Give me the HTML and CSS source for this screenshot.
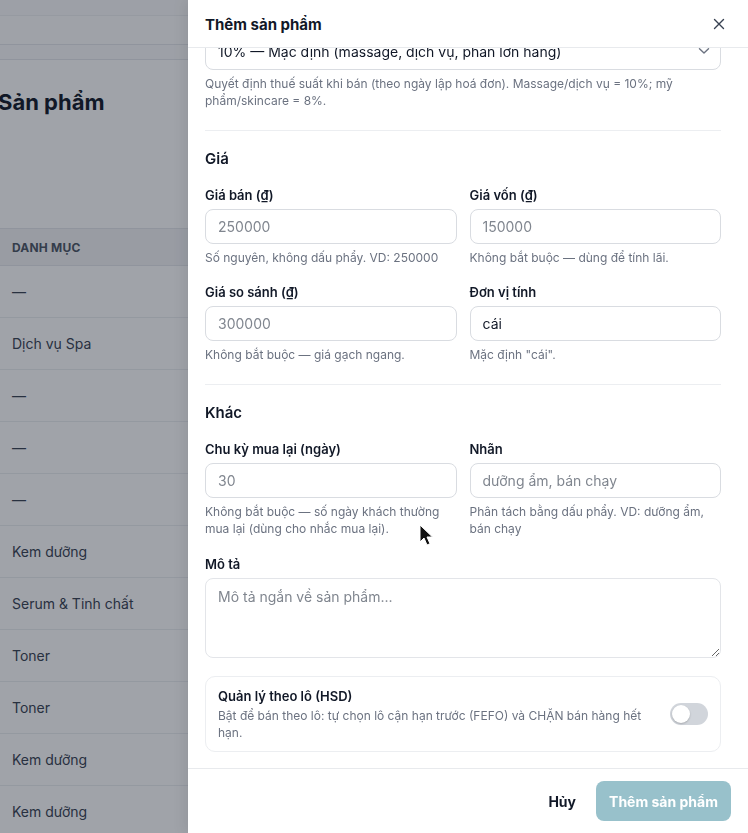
FILE: index.html
```html
<!DOCTYPE html>
<html lang="vi">
<head>
<meta charset="utf-8">
<link rel="stylesheet" href="styles.css">
</head>
<body>
<div class="page">
  <div class="topband"></div>
  <div class="band1"></div>
  <div class="band2"></div>
  <h1 class="page-title">Sản phẩm</h1>
  <div class="table">
    <div class="th">DANH MỤC</div>
    <div class="td">—</div>
    <div class="td">Dịch vụ Spa</div>
    <div class="td">—</div>
    <div class="td">—</div>
    <div class="td">—</div>
    <div class="td">Kem dưỡng</div>
    <div class="td">Serum &amp; Tinh chất</div>
    <div class="td">Toner</div>
    <div class="td">Toner</div>
    <div class="td">Kem dưỡng</div>
    <div class="td">Kem dưỡng</div>
  </div>
</div>
<div class="overlay"></div>
<aside class="drawer">
  <header class="dh">
    <h2 class="dh-title">Thêm sản phẩm</h2>
    <svg class="close" width="12" height="12" viewBox="0 0 12 12"><path d="M1.5 1.5l9 9M10.5 1.5l-9 9" stroke="#374151" stroke-width="1.4" stroke-linecap="round"/></svg>
  </header>
  <div class="db">
    <div class="scroll">
      <div class="select">
        <span>10% — Mặc định (massage, dịch vụ, phần lớn hàng)</span>
        <svg width="12" height="8" viewBox="0 0 12 8"><path d="M1.5 1.8l4.5 4.2 4.5-4.2" fill="none" stroke="#6b7280" stroke-width="1.4" stroke-linecap="round" stroke-linejoin="round"/></svg>
      </div>
      <p class="hint">Quyết định thuế suất khi bán (theo ngày lập hoá đơn). Massage/dịch vụ = 10%; mỹ phẩm/skincare = 8%.</p>
      <hr class="sep">
      <h3 class="sec">Giá</h3>
      <div class="grid">
        <div class="field">
          <label class="lbl">Giá bán (₫)</label>
          <div class="input ph">250000</div>
          <p class="hint">Số nguyên, không dấu phẩy. VD: 250000</p>
        </div>
        <div class="field">
          <label class="lbl">Giá vốn (₫)</label>
          <div class="input ph">150000</div>
          <p class="hint">Không bắt buộc — dùng để tính lãi.</p>
        </div>
        <div class="field">
          <label class="lbl">Giá so sánh (₫)</label>
          <div class="input ph">300000</div>
          <p class="hint">Không bắt buộc — giá gạch ngang.</p>
        </div>
        <div class="field">
          <label class="lbl">Đơn vị tính</label>
          <div class="input">cái</div>
          <p class="hint">Mặc định "cái".</p>
        </div>
      </div>
      <hr class="sep">
      <h3 class="sec">Khác</h3>
      <div class="grid">
        <div class="field">
          <label class="lbl">Chu kỳ mua lại (ngày)</label>
          <div class="input ph">30</div>
          <p class="hint">Không bắt buộc — số ngày khách thường mua lại (dùng cho nhắc mua lại).</p>
        </div>
        <div class="field">
          <label class="lbl">Nhãn</label>
          <div class="input ph">dưỡng ẩm, bán chạy</div>
          <p class="hint">Phân tách bằng dấu phẩy. VD: dưỡng ẩm, bán chạy</p>
        </div>
      </div>
      <div class="field desc">
        <label class="lbl">Mô tả</label>
        <textarea class="ta" placeholder="Mô tả ngắn về sản phẩm..."></textarea>
      </div>
      <div class="toggle-box">
        <div class="tb-text">
          <div class="tb-title">Quản lý theo lô (HSD)</div>
          <div class="tb-desc">Bật để bán theo lô: tự chọn lô cận hạn trước (FEFO) và CHẶN bán hàng hết hạn.</div>
        </div>
        <div class="switch"><span class="knob"></span></div>
      </div>
    </div>
  </div>
  <footer class="df">
    <button class="btn-cancel">Hủy</button>
    <button class="btn-primary">Thêm sản phẩm</button>
  </footer>
</aside>
<svg class="cursor" width="14" height="22" viewBox="0 0 14 22"><path d="M1 1v17l4-4 3 7 3-1.3-3-6.7h5.5z" fill="#111" stroke="#fff" stroke-width="1"/></svg>
</body>
</html>
```
FILE: styles.css
```css
* { box-sizing: border-box; }
html, body { margin: 0; padding: 0; }
body {
  width: 748px;
  height: 833px;
  overflow: hidden;
  font-family: Inter, "Noto Sans", sans-serif;
  color: #111827;
  background: #fff;
  position: relative;
}
.page { width: 748px; }
.topband { height: 15px; background: #fbfbfc; }
.band1 { height: 30px; background: #fdfefe; border-top: 1px solid #eef0f2; border-bottom: 1px solid #e5e7eb; }
.band2 { height: 15px; background: #fbfbfc; border-bottom: 1px solid #e5e7eb; }
.page-title {
  margin: 27px 0 0 -2px;
  font-size: 22px;
  font-weight: 700;
  line-height: 30px;
  color: #111827;
}
.table { margin-top: 111px; }
.th {
  height: 38px;
  display: flex;
  align-items: center;
  padding-left: 12px;
  font-size: 12px;
  font-weight: 700;
  letter-spacing: 0.2px;
  color: #4b5563;
  background: #f3f4f6;
  border-top: 1px solid #e5e7eb;
  border-bottom: 1px solid #e5e7eb;
}
.td {
  height: 52px;
  display: flex;
  align-items: center;
  padding-left: 12px;
  font-size: 14px;
  color: #374151;
  border-bottom: 1px solid #eceef1;
}
.overlay {
  position: fixed;
  inset: 0;
  background: rgba(17, 24, 39, 0.4);
}
.drawer {
  position: fixed;
  top: 0;
  right: 0;
  width: 560px;
  height: 833px;
  background: #fff;
  display: flex;
  flex-direction: column;
  box-shadow: -4px 0 12px rgba(0,0,0,0.08);
}
.dh {
  height: 48px;
  flex: none;
  display: flex;
  align-items: center;
  justify-content: space-between;
  padding: 1px 23px 0 17px;
  border-bottom: 1px solid #e8eaed;
  background: #fff;
  position: relative;
  z-index: 1;
}
.dh-title { margin: 0; font-size: 15px; font-weight: 700; }
.close { display: block; }
.db { flex: 1; overflow: hidden; padding: 0 27px 0 17px; }
.scroll { margin-top: -16px; }
.select {
  height: 38px;
  border: 1px solid #d9dce1;
  border-radius: 8px;
  display: flex;
  align-items: center;
  justify-content: space-between;
  padding: 0 10px 0 12px;
  font-size: 14px;
  color: #111827;
}
.hint {
  margin: 6px 0 0;
  font-size: 12px;
  line-height: 16.5px;
  color: #6b7280;
}
.sep { border: 0; border-top: 1px solid #eceef1; margin: 21px 0 0; }
.sec { margin: 18px 0 0; font-size: 15px; font-weight: 600; line-height: 20px; }
.grid {
  display: grid;
  grid-template-columns: 1fr 1fr;
  column-gap: 13px;
  row-gap: 16px;
  margin-top: 17px;
}
.field { display: flex; flex-direction: column; }
.lbl { font-size: 13px; font-weight: 600; line-height: 18px; margin-bottom: 5px; }
.input {
  height: 35px;
  border: 1px solid #d9dce1;
  border-radius: 8px;
  display: flex;
  align-items: center;
  padding: 0 12px;
  font-size: 14px;
  color: #111827;
}
.input.ph { color: #80868f; }
.field .hint { margin-top: 6px; }
.desc { margin-top: 18px; }
.ta {
  display: block;
  width: 100%;
  height: 80px;
  border: 1px solid #e3e5e9;
  border-radius: 8px;
  padding: 9px 12px;
  font-family: inherit;
  font-size: 14px;
  color: #111827;
  resize: vertical;
}
.ta::placeholder { color: #80868f; }
.toggle-box {
  margin-top: 18px;
  border: 1px solid #eceef1;
  border-radius: 10px;
  padding: 10px 12px 10px 12px;
  display: flex;
  align-items: center;
  gap: 18px;
}
.tb-text { flex: 1; }
.tb-title { font-size: 13px; font-weight: 600; line-height: 18px; }
.tb-desc { font-size: 12px; line-height: 17px; color: #6b7280; margin-top: 2px; }
.switch {
  width: 38px;
  height: 22px;
  border-radius: 11px;
  background: #d1d5db;
  position: relative;
  flex: none;
}
.knob {
  position: absolute;
  left: 2px;
  top: 2px;
  width: 18px;
  height: 18px;
  border-radius: 50%;
  background: #fff;
  box-shadow: 0 1px 2px rgba(0,0,0,0.2);
}
.df {
  height: 65px;
  flex: none;
  border-top: 1px solid #e8eaed;
  display: flex;
  align-items: center;
  justify-content: flex-end;
  gap: 20px;
  padding: 0 17px 0 17px;
}
.btn-cancel {
  border: 0;
  background: none;
  font-family: inherit;
  font-size: 14px;
  font-weight: 700;
  color: #111827;
  padding: 0;
}
.btn-primary {
  width: 135px;
  height: 40px;
  border: 0;
  border-radius: 8px;
  background: #98c1cb;
  color: #fff;
  font-family: inherit;
  font-size: 14px;
  font-weight: 700;
}
.cursor { position: absolute; left: 419px; top: 524px; }
```
